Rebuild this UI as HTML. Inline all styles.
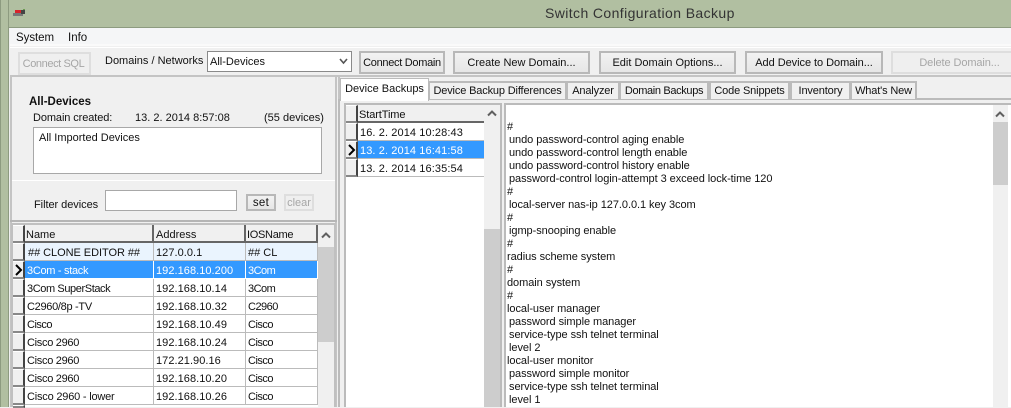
<!DOCTYPE html>
<html><head><meta charset="utf-8"><style>
html,body{margin:0;padding:0}
body{width:1011px;height:407px;overflow:hidden;position:relative;background:#f0f0f0;font:11px/13px "Liberation Sans",sans-serif;color:#111}
div{position:absolute;box-sizing:border-box;white-space:pre}
.btn{background:linear-gradient(#f2f2f2,#e6e6e6);border:2px solid #b8b8b8;text-align:center;height:23px;line-height:21px;top:51px}
.dis{border-color:#dedede;color:#a6a6a6;background:#efefef}
.tab{top:81px;height:18px;border:2px solid #bbb;border-bottom:0;background:#f0f0f0;line-height:17px;text-align:center;letter-spacing:-.15px}
.hd{background:#f0f0f0;border-right:2px solid #666;border-bottom:2px solid #666;line-height:20px;padding-left:1px}
.ind{background:#f0f0f0;border-right:2px solid #444;border-bottom:2px solid #888;border-top:1px solid #fff}
.c{border-bottom:1px solid #bbb;border-right:1px solid #bbb;height:18px;line-height:20px;padding-left:2px;background:#fff}
.n{letter-spacing:-.3px}
.o{letter-spacing:-.5px}
.a{letter-spacing:.05px}
.t{letter-spacing:.1px}
.sel{background:#3399ff;color:#fff}
.first{background:#eaf4fe}
.sb{background:#f0f0f0}
.th{background:#cdcdcd}
.l{left:0;height:13px;line-height:13px;letter-spacing:-.06px}
.i{left:2px}
</style></head><body>
<div style="left:0;top:0;width:1011px;height:28px;background:#b1bfa1;border-bottom:1px solid #8d9b80"></div>
<div style="left:0;top:0;width:9px;height:407px;background:#b1bfa1;border-right:1px solid #8d9b80;border-left:1px solid #8d9b80"></div>
<svg style="position:absolute;left:13px;top:9px" width="14" height="8"><rect x="0" y="4" width="10" height="3" fill="#777"/><rect x="2" y="1" width="6" height="3" fill="#d8232a"/><rect x="8" y="1" width="4" height="4" fill="#444"/><rect x="10" y="0" width="2" height="1" fill="#6a9a50"/></svg>
<div style="left:545px;top:4px;font-size:14px;line-height:18px;color:#333;letter-spacing:.4px">Switch Configuration Backup</div>

<div style="left:10px;top:28px;width:1001px;height:18px;background:#f5f6f7;border-bottom:2px solid #fafafa"></div>
<div style="left:16px;top:32px;font-size:11.5px;letter-spacing:-.05px">System</div>
<div style="left:68px;top:32px;font-size:11.5px">Info</div>

<div style="left:10px;top:47px;width:1001px;height:30px;background:#f0f0f0;border-top:1px solid #fff;border-bottom:2px solid #c4c4c4"></div>
<div class="btn dis" style="left:18px;top:52px;width:73px;letter-spacing:-.4px;line-height:21px;padding-right:2px">Connect SQL</div>
<div style="left:105px;top:55px">Domains / Networks</div>
<div style="left:207px;top:51px;width:145px;height:21px;background:#fff;border:1px solid #8a8a8a;line-height:21px;padding-left:2px">All-Devices</div>
<svg style="position:absolute;left:339px;top:58px" width="9" height="7"><path d="M1 1L4.5 5L8 1" fill="none" stroke="#555" stroke-width="1.6"/></svg>
<div class="btn" style="left:359px;width:86px;letter-spacing:-.3px">Connect Domain</div>
<div class="btn" style="left:453px;width:137px">Create New Domain...</div>
<div class="btn" style="left:599px;width:137px">Edit Domain Options...</div>
<div class="btn" style="left:745px;width:138px;letter-spacing:-.05px">Add Device to Domain...</div>
<div class="btn dis" style="left:891px;width:137px;letter-spacing:-.1px">Delete Domain...</div>

<div style="left:10px;top:77px;width:327px;height:330px;background:#f0f0f0;border-left:2px solid #c4c4c4;border-right:2px solid #c4c4c4"></div>
<div style="left:29px;top:96px;font-weight:bold;font-size:11.5px">All-Devices</div>
<div style="left:33px;top:112px;letter-spacing:-.1px">Domain created:</div>
<div style="left:135px;top:112px">13. 2. 2014 8:57:08</div>
<div style="left:264px;top:112px">(55 devices)</div>
<div style="left:33px;top:127px;width:289px;height:47px;background:#fff;border:1px solid #a8a8a8;padding:4px 5px">All Imported Devices</div>
<div style="left:12px;top:180px;width:323px;height:1px;background:#fff"></div>
<div style="left:34px;top:199px;letter-spacing:-.05px">Filter devices</div>
<div style="left:105px;top:190px;width:132px;height:21px;background:#fff;border:1px solid #a8a8a8"></div>
<div class="btn" style="left:246px;top:194px;width:30px;height:17px;line-height:15px;font-size:11.5px;letter-spacing:.3px">set</div>
<div class="btn dis" style="left:284px;top:194px;width:30px;height:17px;line-height:14px;font-size:11px">clear</div>
<div style="left:10px;top:220px;width:327px;height:2px;background:#b5b5b5"></div>

<!-- device grid -->
<div style="left:11px;top:223px;width:325px;height:184px;background:#fff;border:2px solid #c0c0c0;border-bottom:0"></div>
<div class="ind" style="left:13px;top:225px;width:12px;height:18px"></div>
<div class="hd" style="left:25px;top:225px;width:129px;height:18px">Name</div>
<div class="hd" style="left:154px;top:225px;width:92px;height:18px;padding-left:2px">Address</div>
<div class="hd" style="left:246px;top:225px;width:72px;height:18px;letter-spacing:-.3px">IOSName</div>

<div class="ind" style="left:13px;top:243px;width:12px;height:18px"></div>
<div class="c first" style="left:25px;top:243px;width:129px;padding-left:3px;letter-spacing:-.05px">## CLONE EDITOR ##</div>
<div class="c first a" style="left:154px;top:243px;width:92px">127.0.0.1</div>
<div class="c first" style="left:246px;top:243px;width:72px">## CL</div>

<div class="ind" style="left:13px;top:261px;width:12px;height:18px"></div>
<svg style="position:absolute;left:15px;top:264px" width="8" height="12"><path d="M1 1L6 6L1 11" fill="none" stroke="#000" stroke-width="2"/></svg>
<div class="c sel n" style="left:25px;top:261px;width:129px;border-color:#fff">3Com - stack</div>
<div class="c sel a" style="left:154px;top:261px;width:92px;border-color:#fff">192.168.10.200</div>
<div class="c sel o" style="left:246px;top:261px;width:72px;border-color:#fff">3Com</div>

<div class="ind" style="left:13px;top:279px;width:12px;height:18px"></div>
<div class="c" style="left:25px;top:279px;width:129px;letter-spacing:-.4px">3Com SuperStack</div>
<div class="c a" style="left:154px;top:279px;width:92px">192.168.10.14</div>
<div class="c o" style="left:246px;top:279px;width:72px">3Com</div>

<div class="ind" style="left:13px;top:297px;width:12px;height:18px"></div>
<div class="c n" style="left:25px;top:297px;width:129px">C2960/8p -TV</div>
<div class="c a" style="left:154px;top:297px;width:92px">192.168.10.32</div>
<div class="c o" style="left:246px;top:297px;width:72px">C2960</div>

<div class="ind" style="left:13px;top:315px;width:12px;height:18px"></div>
<div class="c o" style="left:25px;top:315px;width:129px">Cisco</div>
<div class="c a" style="left:154px;top:315px;width:92px">192.168.10.49</div>
<div class="c o" style="left:246px;top:315px;width:72px">Cisco</div>

<div class="ind" style="left:13px;top:333px;width:12px;height:18px"></div>
<div class="c n" style="left:25px;top:333px;width:129px">Cisco 2960</div>
<div class="c a" style="left:154px;top:333px;width:92px">192.168.10.24</div>
<div class="c o" style="left:246px;top:333px;width:72px">Cisco</div>

<div class="ind" style="left:13px;top:351px;width:12px;height:18px"></div>
<div class="c n" style="left:25px;top:351px;width:129px">Cisco 2960</div>
<div class="c a" style="left:154px;top:351px;width:92px">172.21.90.16</div>
<div class="c o" style="left:246px;top:351px;width:72px">Cisco</div>

<div class="ind" style="left:13px;top:369px;width:12px;height:18px"></div>
<div class="c n" style="left:25px;top:369px;width:129px">Cisco 2960</div>
<div class="c a" style="left:154px;top:369px;width:92px">192.168.10.20</div>
<div class="c o" style="left:246px;top:369px;width:72px">Cisco</div>

<div class="ind" style="left:13px;top:387px;width:12px;height:18px"></div>
<div class="c" style="left:25px;top:387px;width:129px;letter-spacing:-.2px">Cisco 2960 - lower</div>
<div class="c a" style="left:154px;top:387px;width:92px">192.168.10.26</div>
<div class="c o" style="left:246px;top:387px;width:72px">Cisco</div>
<div class="ind" style="left:13px;top:405px;width:12px;height:2px"></div>

<div class="sb" style="left:318px;top:225px;width:16px;height:182px"></div>
<svg style="position:absolute;left:321px;top:232px" width="10" height="7"><path d="M1 5.5L5 1.5L9 5.5" fill="none" stroke="#606060" stroke-width="2"/></svg>
<div class="th" style="left:318px;top:247px;width:16px;height:95px"></div>

<!-- tabs -->
<div style="left:338px;top:98px;width:673px;height:309px;background:#f0f0f0;border-left:2px solid #bbb;border-top:2px solid #bbb"></div>
<div style="left:338px;top:77px;width:2px;height:22px;background:#c4c4c4"></div>
<div class="tab" style="left:428px;width:139px">Device Backup Differences</div>
<div class="tab" style="left:566px;width:54px">Analyzer</div>
<div class="tab" style="left:619px;width:90px;letter-spacing:-.35px">Domain Backups</div>
<div class="tab" style="left:709px;width:81px">Code Snippets</div>
<div class="tab" style="left:790px;width:61px">Inventory</div>
<div class="tab" style="left:850px;width:67px">What's New</div>
<div style="left:340px;top:78px;width:89px;height:23px;background:#fff;border:1px solid #bbb;border-bottom:0;line-height:20px;text-align:center">Device Backups</div>

<!-- backups grid -->
<div style="left:344px;top:103px;width:158px;height:304px;background:#fff;border:2px solid #bbb;border-bottom:0"></div>
<div class="ind" style="left:346px;top:105px;width:12px;height:18px"></div>
<div class="hd" style="left:358px;top:105px;width:126px;height:18px;border-right:0;letter-spacing:-.1px">StartTime</div>
<div class="ind" style="left:346px;top:123px;width:12px;height:18px"></div>
<div class="c t" style="left:358px;top:123px;width:126px;border-right:0">16. 2. 2014 10:28:43</div>
<div class="ind" style="left:346px;top:141px;width:12px;height:18px"></div>
<svg style="position:absolute;left:348px;top:144px" width="8" height="12"><path d="M1 1L6 6L1 11" fill="none" stroke="#000" stroke-width="2"/></svg>
<div class="c sel t" style="left:358px;top:141px;width:126px;border-right:0">13. 2. 2014 16:41:58</div>
<div class="ind" style="left:346px;top:159px;width:12px;height:18px"></div>
<div class="c t" style="left:358px;top:159px;width:126px;border-right:0">13. 2. 2014 16:35:54</div>
<div class="sb" style="left:484px;top:105px;width:16px;height:302px"></div>
<svg style="position:absolute;left:487px;top:110px" width="10" height="7"><path d="M1 5.5L5 1.5L9 5.5" fill="none" stroke="#606060" stroke-width="2"/></svg>
<div class="th" style="left:484px;top:229px;width:16px;height:178px"></div>

<!-- text area -->
<div style="left:504px;top:103px;width:507px;height:304px;background:#fff;border:2px solid #bbb;border-bottom:0;border-right:0"></div>
<div style="left:507px;top:121px;width:480px;height:286px;overflow:hidden;line-height:13px">
<div class="l" style="top:0">#</div>
<div class="l i" style="top:13px">undo password-control aging enable</div>
<div class="l i" style="top:26px">undo password-control length enable</div>
<div class="l i" style="top:39px">undo password-control history enable</div>
<div class="l i" style="top:52px">password-control login-attempt 3 exceed lock-time 120</div>
<div class="l" style="top:65px">#</div>
<div class="l i" style="top:78px">local-server nas-ip 127.0.0.1 key 3com</div>
<div class="l" style="top:91px">#</div>
<div class="l i" style="top:104px">igmp-snooping enable</div>
<div class="l" style="top:117px">#</div>
<div class="l" style="top:130px">radius scheme system</div>
<div class="l" style="top:143px">#</div>
<div class="l" style="top:156px">domain system</div>
<div class="l" style="top:169px">#</div>
<div class="l" style="top:182px">local-user manager</div>
<div class="l i" style="top:195px">password simple manager</div>
<div class="l i" style="top:208px">service-type ssh telnet terminal</div>
<div class="l i" style="top:221px">level 2</div>
<div class="l" style="top:234px">local-user monitor</div>
<div class="l i" style="top:247px">password simple monitor</div>
<div class="l i" style="top:260px">service-type ssh telnet terminal</div>
<div class="l i" style="top:273px">level 1</div>
</div>
<div class="sb" style="left:993px;top:105px;width:15px;height:302px"></div>
<svg style="position:absolute;left:995px;top:111px" width="10" height="7"><path d="M1 5.5L5 1.5L9 5.5" fill="none" stroke="#606060" stroke-width="2"/></svg>
<div class="th" style="left:993px;top:122px;width:15px;height:63px"></div>
</body></html>
